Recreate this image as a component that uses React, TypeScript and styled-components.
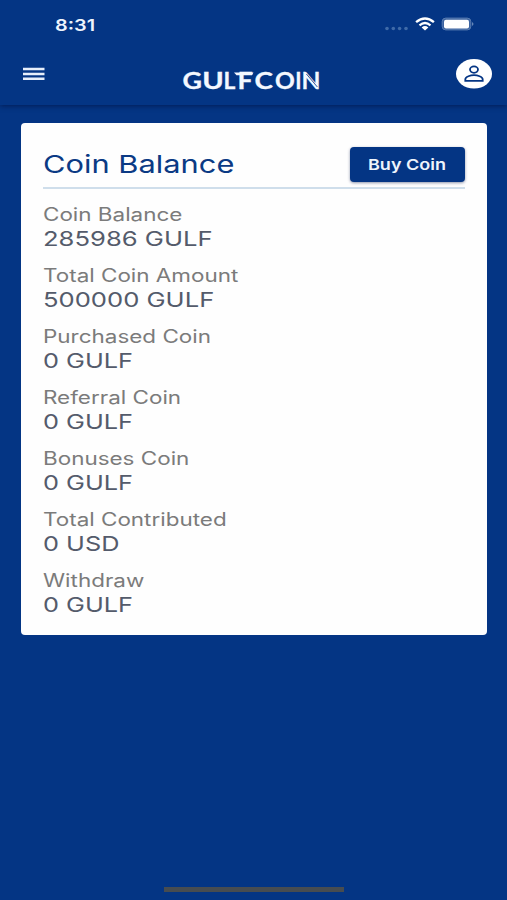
import React from "react";
import styled, { createGlobalStyle } from "styled-components";

const NAVY = "#043584";

const GlobalStyle = createGlobalStyle`
  body {
    margin: 0;
    background: ${NAVY};
    font-family: Inter, "Liberation Sans", sans-serif;
  }
`;

const Screen = styled.div`
  display: flex;
  flex-direction: column;
  width: 507px;
  height: 900px;
  overflow: hidden;
  background: ${NAVY};
`;

const Header = styled.header`
  height: 105px;
  flex: none;
  box-shadow: 0 1px 5px rgba(0, 10, 50, 0.55);
`;

const StatusBar = styled.div`
  display: flex;
  justify-content: space-between;
  align-items: center;
  height: 48px;
  padding: 0 32px 0 55px;
  box-sizing: border-box;
`;

const StatusIcons = styled.div`
  display: flex;
  align-items: center;
`;

const NavBar = styled.nav`
  display: grid;
  grid-template-columns: 158px 140px 1fr;
  align-items: center;
  height: 52px;
  padding: 0 15px 0 23px;

  > :last-child {
    justify-self: end;
  }
`;

const IconButton = styled.button`
  display: flex;
  padding: 0;
  border: 0;
  background: none;
`;

const Wide = styled.span<{ $w: number }>`
  display: inline-block;
  white-space: nowrap;
  transform: scaleX(${(p) => p.$w});
  transform-origin: left center;
`;

const Clock = styled.time`
  padding-top: 1px;
  color: #eef4fc;
  font-size: 16px;
  font-weight: 600;
  line-height: 20px;
`;

const Card = styled.main`
  box-sizing: border-box;
  width: 466px;
  height: 512px;
  margin: 18px 0 0 21px;
  padding: 24px 22px 0;
  border-radius: 4px;
  background: #fefefe;
`;

const CardHead = styled.div`
  display: flex;
  justify-content: space-between;
  height: 40px;
  border-bottom: 2px solid #cfdeeb;
`;

const Title = styled.h1`
  margin: 0;
  color: #0b3a84;
  font-size: 24.5px;
  font-weight: 400;
  line-height: 34px;
`;

const BuyButton = styled.button`
  width: 115.5px;
  height: 35px;
  padding: 0 0 0 18.5px;
  border: 0;
  border-radius: 4px;
  background: ${NAVY};
  box-shadow: 0 1px 3px rgba(0, 20, 70, 0.45);
  color: #eef4fc;
  font: 600 15px/36px Inter, sans-serif;
  text-align: left;
`;

const Balances = styled.dl`
  margin: 14px 0 0;
`;

const Balance = styled.div`
  height: 61.05px;
`;

const Label = styled.dt`
  color: #7b7b7b;
  font-size: 18px;
  line-height: 24px;
`;

const Amount = styled.dd`
  margin: 0;
  color: #545b6b;
  font-size: 20px;
  line-height: 25px;
`;

const HomeIndicator = styled.div`
  width: 180px;
  height: 5px;
  margin: auto 0 8px 164px;
  background: #474c50;
`;

const rows = [
  { label: "Coin Balance", amount: "285986 GULF" },
  { label: "Total Coin Amount", amount: "500000 GULF" },
  { label: "Purchased Coin", amount: "0 GULF" },
  { label: "Referral Coin", amount: "0 GULF" },
  { label: "Bonuses Coin", amount: "0 GULF" },
  { label: "Total Contributed", amount: "0 USD" },
  { label: "Withdraw", amount: "0 GULF" },
];

const letters = [
  { c: "G", x: 1.5, sx: 1.2 },
  { c: "U", x: 21.3, sx: 1.3 },
  { c: "L", x: 42.6, sx: 1.02 },
  { c: "F", x: 56.5, sx: 1.2 },
  { c: "C", x: 73.6, sx: 1.25 },
  { c: "O", x: 94, sx: 1.1 },
  { c: "I", x: 114.2, sx: 0.95 },
  { c: "N", x: 120.6, sx: 1.1 },
];

const Logo = () => (
  <svg width="140" height="40" viewBox="0 0 140 40" aria-label="GULFCOIN">
    <g
      fill="#f4f8ff"
      stroke="#f4f8ff"
      strokeWidth="0.3"
      fontFamily="Lato, sans-serif"
      fontWeight="700"
      fontSize="22.3"
    >
      {letters.map((l) => (
        <text key={l.c + l.x} transform={`translate(${l.x} 34.8) scale(${l.sx} 1)`}>
          {l.c}
        </text>
      ))}
    </g>
    <path d="M53 18.6h19.5l-1.6 2.6H55.5z" fill="#f4f8ff" />
    <path d="M125.4 20l11 13" stroke={NAVY} strokeWidth="0.8" />
  </svg>
);

const SignalDots = () => (
  <svg width="27" height="20" viewBox="0 0 27 20" fill="#3f6aa8">
    <circle cx="3" cy="14.5" r="1.8" />
    <circle cx="9.3" cy="14.5" r="1.8" />
    <circle cx="15.6" cy="14.5" r="1.8" />
    <circle cx="22" cy="14.5" r="1.8" />
  </svg>
);

const Wifi = () => (
  <svg width="28" height="20" viewBox="0 0 28 20" fill="none" stroke="#fff">
    <path d="M5.1 8.2Q14 0.7 22.9 8.2" strokeWidth="2.4" />
    <path d="M8.5 11.3Q14 6.7 19.5 11.3" strokeWidth="2.2" />
    <path d="M10.6 13.5Q14 10.6 17.4 13.5L14 16.4Z" fill="#fff" stroke="none" />
  </svg>
);

const Battery = () => (
  <svg width="36" height="20" viewBox="0 0 36 20">
    <rect x="3.2" y="4.1" width="28.6" height="11.8" rx="3.5" fill="#3c63a0" stroke="#5a7db2" />
    <rect x="5" y="5.8" width="25" height="8.6" rx="2" fill="#fff" />
    <path d="M33 8q3 2 0 4z" fill="#6687b8" />
  </svg>
);

const Menu = () => (
  <svg width="22" height="15" viewBox="0 0 22 15" fill="#e6eefa">
    <path d="M0 .8h21.5v2.5H0zM0 5.7h21.5v2.5H0zM0 10.6h21.5v2.5H0z" />
  </svg>
);

const Profile = () => (
  <svg width="36" height="30" viewBox="0 0 36 30">
    <ellipse cx="18" cy="14.8" rx="18" ry="14.7" fill="#fff" />
    <g fill="none" stroke={NAVY} strokeWidth="1.8">
      <ellipse cx="18" cy="10.6" rx="4" ry="3.2" />
      <path d="M9.3 21.8v-1.4c0-2.7 5.4-4.2 8.7-4.2s8.7 1.5 8.7 4.2v1.4z" />
    </g>
  </svg>
);

export default function App() {
  return (
    <Screen>
      <GlobalStyle />
      <Header>
        <StatusBar>
          <Clock>
            <Wide $w={1.24}>8:31</Wide>
          </Clock>
          <StatusIcons>
            <SignalDots />
            <Wifi />
            <Battery />
          </StatusIcons>
        </StatusBar>
        <NavBar>
          <IconButton aria-label="Menu">
            <Menu />
          </IconButton>
          <Logo />
          <IconButton aria-label="Profile">
            <Profile />
          </IconButton>
        </NavBar>
      </Header>
      <Card>
        <CardHead>
          <Title>
            <Wide $w={1.258}>Coin Balance</Wide>
          </Title>
          <BuyButton>
            <Wide $w={1.2}>Buy Coin</Wide>
          </BuyButton>
        </CardHead>
        <Balances>
          {rows.map((row) => (
            <Balance key={row.label}>
              <Label>
                <Wide $w={1.247}>{row.label}</Wide>
              </Label>
              <Amount>
                <Wide $w={row.amount.startsWith("0") ? 1.265 : 1.28}>{row.amount}</Wide>
              </Amount>
            </Balance>
          ))}
        </Balances>
      </Card>
      <HomeIndicator />
    </Screen>
  );
}
